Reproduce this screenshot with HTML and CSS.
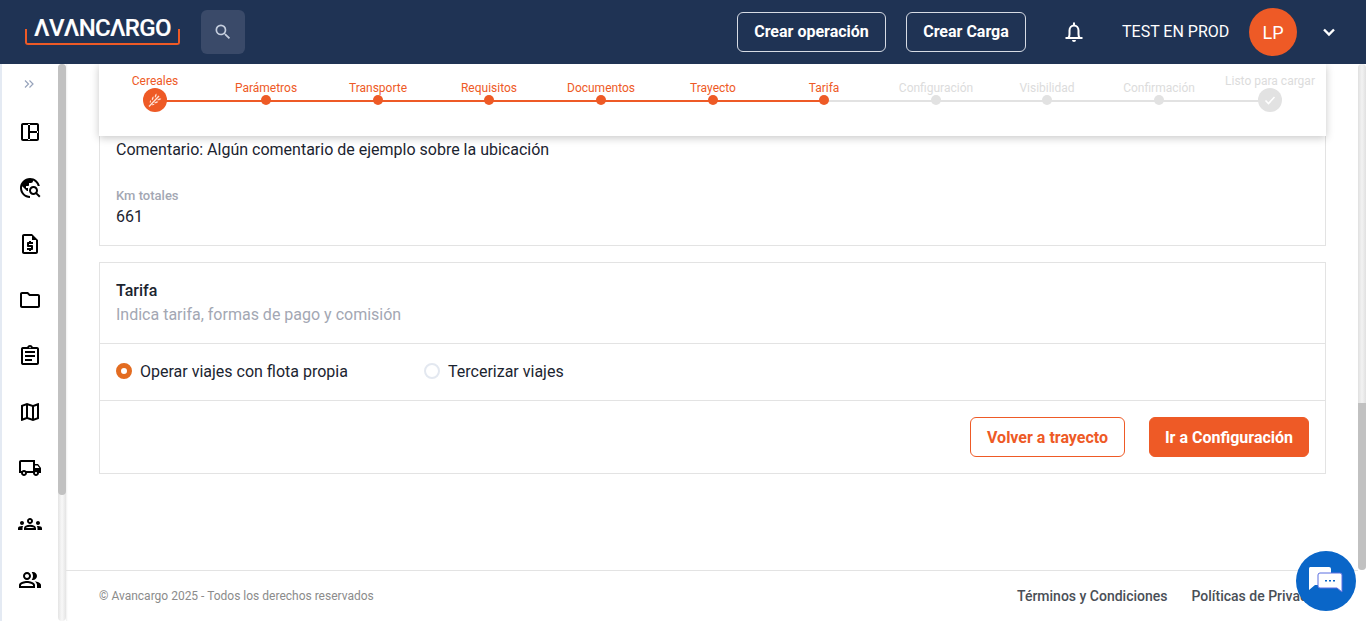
FILE: index.html
```html
<!DOCTYPE html>
<html lang="es">
<head>
<meta charset="utf-8">
<title>Avancargo</title>
<link rel="stylesheet" href="styles.css">
</head>
<body>
<header class="topbar">
  <div class="logo"><span class="logo-text">ΛVΛNCΛRGO</span></div>
  <button class="search-btn"><svg width="20" height="20" viewBox="0 0 24 24"><path fill="#c5cede" d="M15.5 14h-.79l-.28-.27A6.47 6.47 0 0 0 16 9.5 6.5 6.5 0 1 0 9.5 16c1.61 0 3.09-.59 4.23-1.57l.27.28v.79l5 4.99L20.49 19l-4.99-5zm-6 0C7.01 14 5 11.99 5 9.5S7.01 5 9.5 5 14 7.01 14 9.5 11.99 14 9.5 14z"/></svg></button>
  <div class="top-actions">
    <button class="outline-btn op">Crear operación</button>
    <button class="outline-btn carga">Crear Carga</button>
    <svg class="bell" width="24" height="24" viewBox="0 0 24 24"><path fill="none" stroke="#fff" stroke-width="2" d="M3.500 18h17M6.300 18c.9-1 1.200-2 1.200-3.800v-3.700a4.500 5 0 0 1 9 0v3.700c0 1.800.3 2.800 1.200 3.800"/><path fill="#fff" d="M11 2.500h2v3h-2zM10 20h4a2 2 0 0 1-4 0z"/></svg>
    <span class="user">TEST EN PROD</span>
    <span class="avatar">LP</span>
    <svg class="chev" width="24" height="24" viewBox="0 0 24 24"><path fill="none" stroke="#fff" stroke-width="2.400" d="M7 9.500l5 5 5-5"/></svg>
  </div>
</header>
<div class="shell">
  <aside class="sidebar">
    <div class="side-rail">
      <svg class="expand" width="14" height="14" viewBox="0 0 14 14"><path fill="none" stroke="#97a3bb" stroke-width="1.200" d="M3 3.500L6.500 7 3 10.500M7.500 3.500L11 7l-3.500 3.500"/></svg>
      <svg class="nav" viewBox="0 0 24 24"><path d="M19 5v14H5V5h14m0-2H5c-1.100 0-2 .9-2 2v14c0 1.100.9 2 2 2h14c1.100 0 2-.9 2-2V5c0-1.100-.9-2-2-2zM10 4h2v16h-2zM11 11h9v2h-9z"/></svg>
      <svg class="nav" viewBox="0 0 24 24"><path d="M19.300 16.900c.4-.7.7-1.500.7-2.400 0-2.500-2-4.500-4.500-4.500S11 12 11 14.500s2 4.500 4.500 4.500c.9 0 1.700-.3 2.400-.7l3.200 3.200 1.400-1.400-3.200-3.200zm-3.800.1c-1.400 0-2.500-1.100-2.500-2.500s1.100-2.500 2.500-2.500 2.500 1.100 2.500 2.500-1.100 2.500-2.500 2.500zM12 20v2C6.480 22 2 17.520 2 12S6.480 2 12 2c4.840 0 8.870 3.440 9.800 8h-2.070c-.64-2.460-2.400-4.470-4.730-5.460V5c0 1.100-.9 2-2 2h-2v2c0 .55-.45 1-1 1H8v2h2v3H9l-4.790-4.790C4.080 10.790 4 11.390 4 12c0 4.410 3.590 8 8 8z"/></svg>
      <svg class="nav" viewBox="0 0 24 24"><path d="M14 2H6C4.900 2 4.010 2.900 4.010 4L4 20c0 1.100.89 2 1.990 2H18c1.100 0 2-.9 2-2V8l-6-6zm4 18H6V4h8v4h4v12z"/><path d="M11 19h2v-1h1c.55 0 1-.45 1-1v-3c0-.55-.45-1-1-1h-3v-1h4v-2h-2V9h-2v1h-1c-.55 0-1 .45-1 1v3c0 .55.45 1 1 1h3v1H9v2h2v1z"/></svg>
      <svg class="nav" viewBox="0 0 24 24"><path d="M9.170 6l2 2H20v10H4V6h5.170M10 4H4c-1.100 0-1.990.9-1.990 2L2 18c0 1.100.9 2 2 2h16c1.100 0 2-.9 2-2V8c0-1.100-.9-2-2-2h-8l-2-2z"/></svg>
      <svg class="nav" viewBox="0 0 24 24"><path d="M7 15h7v2H7zm0-4h10v2H7zm0-4h10v2H7zm12-4h-4.180C14.400 1.840 13.300 1 12 1c-1.300 0-2.400.84-2.820 2H5c-.14 0-.27.01-.4.04-.39.08-.74.28-1.010.55-.18.18-.33.4-.43.64-.1.23-.16.49-.16.77v14c0 .27.06.54.16.78s.25.45.43.64c.27.27.62.47 1.010.55.13.02.26.03.4.03h14c1.100 0 2-.9 2-2V5c0-1.100-.9-2-2-2zm-7-.25c.41 0 .75.34.75.75s-.34.75-.75.75-.75-.34-.75-.75.34-.75.75-.75zM19 19H5V5h14v14z"/></svg>
      <svg class="nav" viewBox="0 0 24 24"><path d="M20.500 3l-.16.03L15 5.100 9 3 3.360 4.900c-.21.07-.36.25-.36.48V20.500c0 .28.22.5.5.5l.16-.03L9 18.900l6 2.100 5.640-1.900c.21-.07.36-.25.36-.48V3.500c0-.28-.22-.5-.5-.5zM10 5.470l4 1.400v11.660l-4-1.400V5.470zm-5 .99l3-1.010v11.700l-3 1.160V6.460zm14 11.080l-3 1.010V6.860l3-1.160v11.840z"/></svg>
      <svg class="nav" viewBox="0 0 24 24"><path d="M20 8h-3V4H3c-1.100 0-2 .9-2 2v11h2c0 1.660 1.340 3 3 3s3-1.340 3-3h6c0 1.660 1.340 3 3 3s3-1.340 3-3h2v-5l-3-4zm-.5 1.500l1.960 2.500H17V9.500h2.500zM6 18c-.55 0-1-.45-1-1s.45-1 1-1 1 .45 1 1-.45 1-1 1zm2.220-3c-.55-.61-1.330-1-2.220-1s-1.670.39-2.220 1H3V6h12v9H8.220zM18 18c-.55 0-1-.45-1-1s.45-1 1-1 1 .45 1 1-.45 1-1 1z"/></svg>
      <svg class="nav" viewBox="0 0 24 24"><path d="M4 13c1.100 0 2-.9 2-2s-.9-2-2-2-2 .9-2 2 .9 2 2 2zm1.130 1.100c-.37-.06-.74-.1-1.130-.1-.99 0-1.930.21-2.780.58C.48 14.900 0 15.620 0 16.430V18h4.500v-1.610c0-.83.23-1.610.63-2.290zM20 13c1.100 0 2-.9 2-2s-.9-2-2-2-2 .9-2 2 .9 2 2 2zm4 3.430c0-.81-.48-1.530-1.220-1.850-.85-.37-1.790-.58-2.780-.58-.39 0-.76.04-1.130.1.4.68.63 1.460.63 2.290V18H24v-1.570zm-7.760-2.780C15.070 13.130 13.630 12.750 12 12.750c-1.630 0-3.070.39-4.240.9C6.680 14.130 6 15.210 6 16.390V18h12v-1.610c0-1.180-.68-2.260-1.760-2.740zM8.070 16c.09-.23.13-.39.91-.69.97-.38 1.990-.56 3.020-.56s2.050.18 3.020.56c.77.3.81.46.91.69H8.070zM12 8c.55 0 1 .45 1 1s-.45 1-1 1-1-.45-1-1 .45-1 1-1m0-2c-1.660 0-3 1.340-3 3s1.340 3 3 3 3-1.340 3-3-1.340-3-3-3z"/></svg>
      <svg class="nav" viewBox="0 0 24 24"><path d="M16.670 13.130C18.040 14.060 19 15.320 19 17v3h4v-3c0-2.180-3.570-3.470-6.330-3.870zM15 12c2.210 0 4-1.790 4-4s-1.790-4-4-4c-.47 0-.91.1-1.330.24C14.500 5.270 15 6.580 15 8s-.5 2.730-1.330 3.760c.42.14.86.24 1.330.24zM9 12c2.210 0 4-1.790 4-4s-1.790-4-4-4-4 1.790-4 4 1.790 4 4 4zm0-6c1.100 0 2 .9 2 2s-.9 2-2 2-2-.9-2-2 .9-2 2-2zM9 13c-2.670 0-8 1.340-8 4v3h16v-3c0-2.660-5.330-4-8-4zm6 5H3v-.99C3.200 16.290 6.300 15 9 15s5.800 1.290 6 2v1z"/></svg>
    </div>
    <div class="side-scroll"><span class="side-thumb"></span></div>
  </aside>
  <main class="content">
    <section class="stepper">
      <div class="track done-track"></div>
      <div class="track todo-track"></div>
      <div class="step done first"><span class="label">Cereales</span><span class="node big"><svg width="18" height="18" viewBox="0 0 18 18"><path d="M3 15.500L13 5" stroke="#ffe3d8" stroke-width="1.300" fill="none"/><path d="M6 9.500c-.6-1.800 0-3.200 1.300-4.300.6 1.500.3 3-1.300 4.300zM9 6.700c-.6-1.800 0-3.200 1.300-4.300.6 1.500.3 3-1.300 4.300zM8 12c1.800.6 3.200 0 4.300-1.300-1.500-.6-3-.3-4.300 1.300zM11 9c1.800.6 3.200 0 4.300-1.300-1.500-.6-3-.3-4.300 1.300zM4 12c-.5-1.200-.2-2.200.7-3.100.5 1.100.3 2.200-.7 3.100zM5.500 14c1.200.5 2.200.2 3.100-.7-1.100-.5-2.200-.3-3.100.7z" fill="#ffe3d8"/></svg></span></div>
      <div class="step done"><span class="label">Parámetros</span><span class="node"></span></div>
      <div class="step done"><span class="label">Transporte</span><span class="node"></span></div>
      <div class="step done"><span class="label">Requisitos</span><span class="node"></span></div>
      <div class="step done"><span class="label">Documentos</span><span class="node"></span></div>
      <div class="step done"><span class="label">Trayecto</span><span class="node"></span></div>
      <div class="step done"><span class="label">Tarifa</span><span class="node"></span></div>
      <div class="step"><span class="label">Configuración</span><span class="node"></span></div>
      <div class="step"><span class="label">Visibilidad</span><span class="node"></span></div>
      <div class="step"><span class="label">Confirmación</span><span class="node"></span></div>
      <div class="step last"><span class="label">Listo para cargar</span><span class="node big"><svg width="14" height="14" viewBox="0 0 14 14"><path d="M2.500 7.500l3 3 6-6.500" fill="none" stroke="#fff" stroke-width="1.600"/></svg></span></div>
    </section>
    <section class="card summary">
      <p class="comment">Comentario: Algún comentario de ejemplo sobre la ubicación</p>
      <p class="km-label">Km totales</p>
      <p class="km-value">661</p>
    </section>
    <section class="card tarifa">
      <div class="tarifa-head">
        <h2>Tarifa</h2>
        <p>Indica tarifa, formas de pago y comisión</p>
      </div>
      <div class="radio-row">
        <label class="radio"><span class="dot on"></span>Operar viajes con flota propia</label>
        <label class="radio second"><span class="dot"></span>Tercerizar viajes</label>
      </div>
      <div class="card-actions">
        <button class="btn ghost">Volver a trayecto</button>
        <button class="btn solid">Ir a Configuración</button>
      </div>
    </section>
    <footer class="footer">
      <span class="copy">© Avancargo 2025 - Todos los derechos reservados</span>
      <nav class="links"><span>Términos y Condiciones</span><span>Políticas de Privacidad</span></nav>
    </footer>
  </main>
  <div class="page-scroll"><span class="page-thumb"></span></div>
</div>
<div class="chat"><svg width="38" height="32" viewBox="0 0 38 32"><path fill="#fff" d="M3 2h19a2 2 0 0 1 2 2v14a2 2 0 0 1-2 2H8l-6 5V4a2 2 0 0 1 1-2z"/><path fill="#fff" stroke="#5b6fe0" stroke-width="1" d="M13 8h20a2 2 0 0 1 2 2v17l-5-4H13a2 2 0 0 1-2-2V10a2 2 0 0 1 2-2z"/><path fill="#0a66c8" d="M18 15h2v1.500h-2zM22 15h2v1.500h-2zM26 15h2v1.500h-2z"/></svg></div>
</body>
</html>
```
FILE: styles.css
```css
* { box-sizing: border-box; }
html, body { margin: 0; height: 621px; overflow: hidden; }
body { font-family: Roboto, "Liberation Sans", sans-serif; color: #1b2430; background: #fff; }
p, h2 { margin: 0; }
button { font-family: inherit; cursor: pointer; }

.topbar { height: 64px; background: #1f3354; display: flex; align-items: center; padding-left: 25px; position: relative; z-index: 3; }
.logo { width: 155px; height: 16px; align-self: flex-start; margin-top: 29px; border: 2px solid #ee5a26; border-top: 0; border-radius: 0 0 3px 3px; position: relative; }
.logo-text { position: absolute; left: 7px; top: -15px; font-size: 24px; font-weight: 500; letter-spacing: -.7px; color: #fff; line-height: 28px; white-space: nowrap; -webkit-text-stroke: .15px #fff; }
.search-btn { width: 44px; height: 44px; margin-left: 21px; background: #3a4a69; border: 0; border-radius: 6px; display: flex; align-items: center; justify-content: center; padding: 0; }
.top-actions { margin-left: auto; display: flex; align-items: center; }
.outline-btn { height: 40px; background: transparent; color: #fff; border: 1px solid #d6dbe4; border-radius: 6px; font-size: 16px; font-weight: 700; padding: 0 0 2px; margin-right: 20px; }
.outline-btn.op { width: 149px; }
.outline-btn.carga { width: 120px; }
.bell { margin-left: 16px; margin-bottom: 0; }
.user { font-size: 16px; color: #fff; margin-left: 36px; width: 127px; margin-bottom: 2px; }
.avatar { width: 48px; height: 48px; border-radius: 50%; background: #ee5a26; color: #fff; font-size: 18px; display: flex; align-items: center; justify-content: center; }
.chev { margin: 0 25px 0 20px; }

.shell { display: flex; height: 557px; }
.sidebar { width: 66px; display: flex; flex: none; }
.side-rail { width: 58px; display: flex; flex-direction: column; align-items: center; border-left: 2px solid #e4eaf3; overflow: hidden; }
.expand { flex: none; margin-top: 13px; margin-bottom: 29px; margin-right: 2px; }
.nav { width: 24px; height: 24px; flex: none; margin-bottom: 32px; }
.side-scroll { width: 8px; height: 557px; background: linear-gradient(90deg, #e4e4e4, #f8f8f8 50%, #e4e4e4); border-radius: 4px; }
.side-thumb { display: block; width: 8px; height: 431px; background: #c1c1c1; border-radius: 4px; }

.content { flex: 1; min-width: 0; padding: 0 32px 0 33px; display: flex; flex-direction: column; position: relative; box-shadow: inset 2px 0 2px -1px rgba(0,0,0,.06); }
.stepper { height: 72px; position: relative; background: #fff; box-shadow: 0 2px 8px rgba(0,0,0,.22); z-index: 2; flex: none; }
.track { position: absolute; top: 36px; height: 2px; }
.done-track { left: 56px; width: 669px; background: #ee5a26; }
.todo-track { left: 725px; width: 446px; background: #e2e2e2; }
.step { position: absolute; top: 0; width: 100px; text-align: center; color: #dcdcdc; font-size: 12px; }
.step .label { position: absolute; left: 0; right: 0; top: 17px; line-height: 14px; white-space: nowrap; }
.step .node { position: absolute; left: 45px; top: 31px; width: 10px; height: 10px; border-radius: 50%; background: #e2e2e2; }
.step .node.big { left: 38px; top: 24px; width: 24px; height: 24px; display: flex; align-items: center; justify-content: center; }
.step.done { color: #ee5a26; }
.step.done .node { background: #ee5a26; }
.step.first { left: 6px; }
.step.first .label, .step.last .label { top: 10px; }
.step:nth-child(4) { left: 117px; }
.step:nth-child(5) { left: 229px; }
.step:nth-child(6) { left: 340px; }
.step:nth-child(7) { left: 452px; }
.step:nth-child(8) { left: 564px; }
.step:nth-child(9) { left: 675px; }
.step:nth-child(10) { left: 787px; }
.step:nth-child(11) { left: 898px; }
.step:nth-child(12) { left: 1010px; }
.step.last { left: 1121px; }

.card { border: 1px solid #e3e3e3; background: #fff; flex: none; }
.summary { height: 110px; padding: 5px 16px 0; border-top: 0; }
.comment { font-size: 16px; line-height: 18px; }
.km-label { font-size: 13px; font-weight: 500; color: #a3a7b3; margin-top: 29px; line-height: 16px; }
.km-value { font-size: 16px; line-height: 18px; margin-top: 4px; }
.tarifa { height: 212px; margin-top: 16px; }
.tarifa-head { height: 81px; padding: 18px 16px 0; border-bottom: 1px solid #e3e3e3; }
.tarifa-head h2 { font-size: 16px; font-weight: 500; line-height: 20px; }
.tarifa-head p { font-size: 16px; color: #a3a7b3; line-height: 20px; margin-top: 4px; }
.radio-row { height: 57px; padding: 0 16px 2px; display: flex; align-items: center; border-bottom: 1px solid #e3e3e3; font-size: 16px; }
.radio { display: flex; align-items: center; gap: 8px; width: 308px; }
.dot { width: 16px; height: 16px; border-radius: 50%; border: 2px solid #e3e8f0; background: #fff; }
.dot.on { border: 5px solid #e36c21; }
.card-actions { height: 72px; padding: 0 16px; display: flex; justify-content: flex-end; align-items: center; gap: 24px; }
.btn { height: 40px; border-radius: 6px; font-size: 16px; font-weight: 700; border: 1px solid #ee5a26; padding: 0; }
.ghost { width: 155px; background: #fff; color: #ee5a26; }
.solid { width: 160px; background: #ee5a26; color: #fff; }

.footer { position: absolute; left: 0; right: 0; top: 506px; height: 51px; border-top: 1px solid #e3e3e3; padding: 0 32px 0 33px; display: flex; align-items: center; justify-content: space-between; font-size: 12px; color: #8b8b8b; white-space: nowrap; overflow: hidden; }
.links { display: flex; gap: 24px; color: #4a4f57; font-size: 14px; font-weight: 500; margin-right: -8px; margin-bottom: 1px; width: 317px; flex: none; }

.page-scroll { width: 8px; height: 506px; flex: none; background: linear-gradient(90deg, #e0e0e0, #f2f2f2 50%, #e0e0e0); border-radius: 4px; position: relative; }
.page-thumb { position: absolute; left: 0; top: 339px; bottom: 0; width: 8px; background: #c1c1c1; border-radius: 0 0 4px 4px; }
.chat { position: fixed; left: 1296px; top: 551px; width: 60px; height: 60px; border-radius: 50%; background: #0a66c8; display: flex; align-items: center; justify-content: center; z-index: 4; }
```
